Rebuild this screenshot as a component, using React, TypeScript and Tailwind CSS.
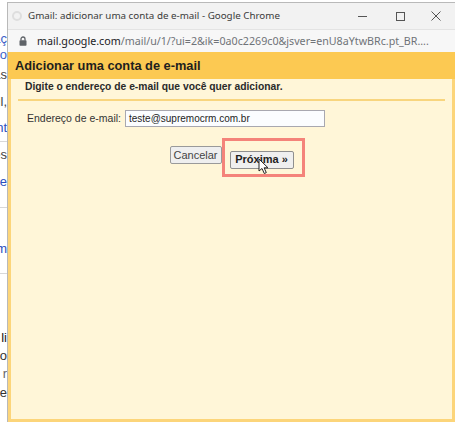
import React from "react";

function LeftStrip() {
  const rows: { h: number; t: string; c: string; line?: boolean }[] = [
    { h: 30, t: "", c: "#1a0dab" },
    { h: 16, t: "aç", c: "#3b5fc7" },
    { h: 16, t: "o", c: "#3b5fc7" },
    { h: 24, t: "as", c: "#444" },
    { h: 30, t: "il,", c: "#444" },
    { h: 22, t: "nt", c: "#2a4fc0" },
    { h: 4, t: "", c: "#444", line: true },
    { h: 24, t: "es", c: "#444" },
    { h: 30, t: "de", c: "#2a4fc0" },
    { h: 12, t: "", c: "#444", line: true },
    { h: 30, t: "", c: "#444" },
    { h: 20, t: "m", c: "#2a4fc0" },
    { h: 16, t: "", c: "#444", line: true },
    { h: 54, t: "", c: "#444" },
    { h: 18, t: "li", c: "#222" },
    { h: 18, t: "o", c: "#333" },
    { h: 18, t: "r", c: "#666" },
    { h: 20, t: "e", c: "#333" },
  ];
  return (
    <div className="w-[7px] shrink-0 flex flex-col bg-white overflow-hidden">
      {rows.map((r, i) => (
        <div
          key={i}
          className={
            "flex items-center justify-end whitespace-nowrap overflow-hidden text-[13px] leading-none " +
            (r.line ? "border-b border-[#d8d8d8]" : "")
          }
          style={{ height: r.h, color: r.c, fontFamily: "'Liberation Sans', Arial, sans-serif" }}
        >
          {r.t}
        </div>
      ))}
    </div>
  );
}

function Cursor() {
  return (
    <svg
      className="absolute left-[28px] top-[12px] pointer-events-none"
      width="12"
      height="17"
      viewBox="0 0 12 17"
    >
      <path
        d="M1 1 L1 13 L4 10.5 L6.3 15.5 L8.3 14.6 L6.1 9.8 L10 9.8 Z"
        fill="#ffffff"
        stroke="#222"
        strokeWidth="1"
        strokeLinejoin="round"
      />
    </svg>
  );
}

export default function App() {
  const arial = { fontFamily: "'Liberation Sans', Arial, sans-serif" };
  const noto = { fontFamily: "'Noto Sans', 'Open Sans', sans-serif" };
  return (
    <div className="w-[455px] h-[422px] flex bg-white overflow-hidden">
      <LeftStrip />
      <div className="flex-1 min-w-0 flex flex-col mt-[2px] border-l border-t border-[#b9b9b9]">
        {/* Title bar */}
        <div
          className="h-[26px] shrink-0 flex items-center bg-[#f2f2f2] text-[#3a3a3a] text-[9.8px] whitespace-nowrap overflow-hidden"
          style={noto}
        >
          <div className="w-[10px] h-[10px] ml-[4px] shrink-0 rounded-full border-2 border-[#dedede]" />
          <span className="ml-[6px]">Gmail: adicionar uma conta de e-mail - Google Chrome</span>
          <div className="ml-auto flex items-center h-full shrink-0">
            <div className="w-[38px] flex justify-center">
              <div className="w-[9px] h-[1px] bg-[#555]" />
            </div>
            <div className="w-[38px] flex justify-center">
              <div className="w-[9px] h-[9px] border border-[#555]" />
            </div>
            <div className="w-[36px] flex justify-center pr-[2px]">
              <svg width="10" height="10" viewBox="0 0 10 10">
                <path d="M0.5 0.5 L9.5 9.5 M9.5 0.5 L0.5 9.5" stroke="#555" strokeWidth="1" />
              </svg>
            </div>
          </div>
        </div>
        {/* Address bar */}
        <div
          className="h-[23px] shrink-0 flex items-center bg-[#f7f7f7] border-t border-[#e3e3e3] text-[10.7px] whitespace-nowrap overflow-hidden"
          style={noto}
        >
          <svg className="ml-[11px] shrink-0" width="8" height="10" viewBox="0 0 8 10">
            <path d="M2 4.5 V3 a2 2 0 0 1 4 0 V4.5" fill="none" stroke="#5f6368" strokeWidth="1.3" />
            <rect x="0.5" y="4.3" width="7" height="5.4" rx="0.8" fill="#5f6368" />
          </svg>
          <span className="ml-[10px]">
            <span className="text-[#202124]">mail.google.com</span>
            <span className="text-[#6f7378]">/mail/u/1/?ui=2&amp;ik=0a0c2269c0&amp;jsver=enU8aYtwBRc.pt_BR....</span>
          </span>
        </div>
        {/* Dialog */}
        <div className="flex-1 flex flex-col" style={arial}>
          <div className="h-[27px] shrink-0 flex items-center bg-[#fcc952] pl-[7px] text-[12.8px] font-bold text-[#1e1e1e]">
            Adicionar uma conta de e-mail
          </div>
          <div className="flex-1 flex flex-col bg-[#fff6d8] border-x-[3px] border-b-[3px] border-[#fcd57a] px-[7px]">
            <div className="pt-[1px] pl-[7px] h-[20px] flex items-start text-[10.3px] font-bold text-[#2a2a2a] leading-[13px]">
              Digite o endereço de e-mail que você quer adicionar.
            </div>
            <div className="h-[2px] bg-[#f8d57e]" />
            <div className="flex items-center pt-[8px] pl-[9px] h-[26px]">
              <span className="text-[10.5px] text-[#333] mr-[4px] mt-[1px]">Endereço de e-mail:</span>
              <div className="w-[200px] h-[17px] bg-[#fbfdff] border border-[#a8a8b0] flex items-center px-[3px] text-[10px] text-[#1e1e1e]">
                teste@supremocrm.com.br
              </div>
            </div>
            <div className="flex justify-center items-start pt-[19px] gap-[8px]">
              <button className="h-[18px] w-[52px] bg-[#efefef] border border-[#9a9a9a] rounded-[2px] text-[11px] text-[#444] leading-none">
                Cancelar
              </button>
              <div className="relative">
                <button className="h-[18px] w-[64px] bg-[#efefef] border border-[#8f8f8f] rounded-[2px] text-[11px] font-bold text-[#222] leading-none">
                  Próxima »
                </button>
                <div className="absolute -left-[8px] -right-[11px] -top-[8px] -bottom-[7px] border-[3px] border-[#f4837a] pointer-events-none" />
                <Cursor />
              </div>
            </div>
          </div>
        </div>
      </div>
    </div>
  );
}
